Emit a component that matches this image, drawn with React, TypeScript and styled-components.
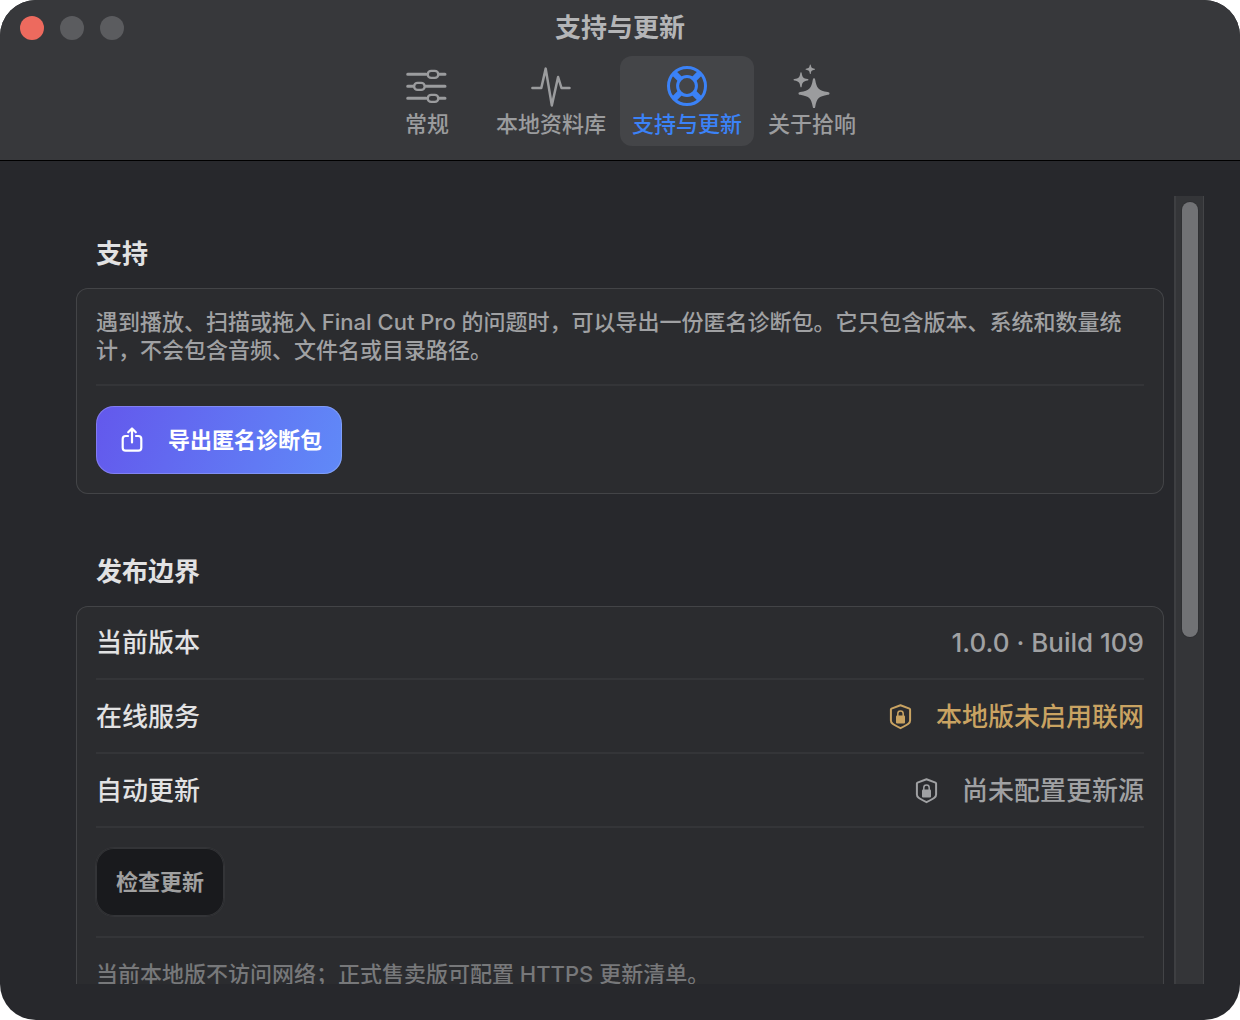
import React, { useState } from "react";
import styled, { createGlobalStyle } from "styled-components";

const GlobalStyle = createGlobalStyle`
  * { box-sizing: border-box; }
  body {
    margin: 0;
    background: #fff;
    font-family: Inter, "Noto Sans CJK SC", sans-serif;
    font-size: 22px;
    line-height: 28px;
    color: #e2e2e3;
  }
  button { font: inherit; border: 0; cursor: pointer; }
`;

const Window = styled.div`
  display: flex;
  flex-direction: column;
  height: 100vh;
  min-width: 640px;
  border-radius: 36px;
  overflow: hidden;
  background: #27282c;
`;

const Header = styled.header`
  flex: none;
  padding-bottom: 14px;
  background: #37383b;
  border-bottom: 1px solid #000;
`;

const TitleBar = styled.div`
  display: grid;
  grid-template-columns: 1fr auto 1fr;
  align-items: center;
  height: 56px;
  padding: 0 20px;
`;

const Lights = styled.div`
  display: flex;
  gap: 16px;
`;

const Light = styled.button<{ $color: string }>`
  width: 24px;
  height: 24px;
  padding: 0;
  border-radius: 50%;
  background: ${(p) => p.$color};
`;

const Title = styled.h1`
  margin: 0;
  font-size: 26px;
  line-height: 36px;
  font-weight: 700;
  color: #b4b5b7;
`;

const Tabs = styled.nav`
  display: flex;
  justify-content: center;
  gap: 2px;
`;

const Tab = styled.button<{ $active: boolean }>`
  display: flex;
  flex-direction: column;
  align-items: center;
  gap: 2px;
  min-width: 110px;
  padding: 8px 12px;
  border-radius: 12px;
  white-space: nowrap;
  font-weight: 500;
  color: ${(p) => (p.$active ? "#3b82f7" : "#9b9c9e")};
  background: ${(p) => (p.$active ? "#444548" : "transparent")};
`;

const Content = styled.main`
  flex: 1;
  min-height: 0;
  display: flex;
  padding: 35px 36px 36px;
`;

const Scroller = styled.div`
  flex: 1;
  min-width: 0;
  overflow-y: auto;
  scrollbar-width: none;
  padding: 40px 10px 40px 40px;
`;

const Track = styled.div`
  flex: none;
  width: 30px;
  padding: 6px;
  background: #343538;
  border-left: 2px solid #3e3f42;
  border-right: 1px solid #434447;
`;

const Thumb = styled.div`
  width: 16px;
  height: 56%;
  border-radius: 8px;
  background: #717275;
  box-shadow: 0 0 0 1px #2f3033;
`;

const Section = styled.section`
  & + & { margin-top: 60px; }
`;

const Heading = styled.h2`
  margin: 0 20px 16px;
  font-size: 26px;
  line-height: 36px;
  font-weight: 700;
`;

const Card = styled.div`
  padding: 0 20px;
  border-radius: 12px;
  background: #2b2c2f;
  box-shadow: inset 0 0 0 1px #434447;
`;

const Block = styled.div`
  padding: 20px 0;
  & + & { border-top: 2px solid #343538; }
`;

const Paragraph = styled.p`
  margin: 0;
  font-weight: 500;
  color: #a0a1a3;
`;

const List = styled.dl`
  margin: 0;
`;

const Row = styled.div`
  display: flex;
  align-items: center;
  justify-content: space-between;
  height: 74px;
  padding-top: 2px;
  border-bottom: 2px solid #343538;
  font-size: 26px;
  line-height: 36px;
  font-weight: 500;
`;

const Value = styled.dd<{ $tone?: "warn" }>`
  display: flex;
  align-items: center;
  gap: 20px;
  margin: 0;
  color: ${(p) => (p.$tone === "warn" ? "#c9a362" : "#a0a1a3")};
`;

const PrimaryButton = styled.button`
  display: flex;
  align-items: center;
  gap: 20px;
  height: 68px;
  padding: 0 20px;
  border-radius: 18px;
  font-weight: 700;
  color: #fff;
  background: linear-gradient(110deg, #6358ec, #608af8);
  box-shadow: inset 0 0 0 1px rgba(255, 255, 255, 0.2);
`;

const QuietButton = styled.button`
  display: block;
  height: 68px;
  padding: 0 20px;
  border-radius: 18px;
  font-weight: 700;
  color: #a0a0a0;
  background: #191a1d;
  box-shadow: 0 0 0 1px #333437, inset 0 0 0 1px #333437;
`;

const Footnote = styled.p`
  margin: 0;
  padding: 22px 0;
  border-top: 2px solid #343538;
  font-weight: 500;
  color: #77787a;
`;

const SlidersIcon = () => (
  <svg width="44" height="44" viewBox="0 0 44 44" fill="none" stroke="currentColor" strokeLinecap="round" aria-hidden="true">
    <path strokeWidth="3" d="M2.700 10.300H21M34.500 10.300h5.500M2.700 22.300H8M21 22.300h19M2.700 34.300H21M34.500 34.300h5.500" />
    <g strokeWidth="2.400">
      <rect x="22.700" y="6.900" width="10.600" height="7" rx="3.500" />
      <rect x="9.100" y="18.900" width="10.600" height="7" rx="3.500" />
      <rect x="22.700" y="30.900" width="10.600" height="7" rx="3.500" />
    </g>
  </svg>
);

const WaveIcon = () => (
  <svg width="44" height="44" viewBox="0 0 44 44" fill="none" stroke="currentColor" strokeWidth="2.500" strokeLinecap="round" strokeLinejoin="round" aria-hidden="true">
    <path d="M3.400 24h8.900l4.400-19.400L22.800 41.400l6.300-28.400 3.400 11h8" />
  </svg>
);

const LifebuoyIcon = () => (
  <svg width="44" height="44" viewBox="0 0 44 44" fill="none" stroke="currentColor" aria-hidden="true">
    <circle cx="22" cy="22" r="18.500" strokeWidth="3" />
    <circle cx="22" cy="22" r="9.400" strokeWidth="3" />
    <path strokeWidth="6" d="M9.300 9.300l6 6M34.700 9.300l-6 6M9.300 34.700l6-6M34.700 34.700l-6-6" />
  </svg>
);

const SparklesIcon = () => (
  <svg width="44" height="44" viewBox="0 0 44 44" fill="currentColor" aria-hidden="true">
    <path d="M24 14.200c.8 0 1 .7 1.200 1.600 1.500 8.600 3.200 10.700 12.600 12.300 1 .2 1.700.5 1.700 1.300s-.7 1.100-1.700 1.300c-9.400 1.600-11.100 3.700-12.600 12.300-.2.900-.4 1.600-1.200 1.600s-1-.7-1.200-1.600c-1.500-8.600-3.200-10.700-12.600-12.300-1-.2-1.700-.5-1.700-1.300s.7-1.100 1.700-1.300c9.400-1.600 11.100-3.700 12.600-12.300.2-.9.400-1.600 1.200-1.600z" />
    <path d="M11 8.300c.5 0 .6.400.7.900.7 4.100 1.500 5.100 5.900 5.900.5.100.9.300.9.700s-.4.600-.9.700c-4.400.8-5.200 1.800-5.900 5.900-.1.500-.2.900-.7.900s-.6-.4-.7-.9c-.7-4.100-1.500-5.100-5.900-5.900-.5-.1-.9-.3-.9-.7s.4-.6.900-.7c4.400-.8 5.200-1.800 5.900-5.900.1-.5.200-.9.700-.9z" />
    <path d="M20.300.5c.3 0 .4.300.5.600.4 2.600 1 3.200 3.800 3.700.3.100.5.200.5.500s-.2.400-.5.500c-2.800.5-3.400 1.100-3.800 3.700-.1.300-.2.600-.5.600s-.4-.3-.5-.6c-.4-2.600-1-3.200-3.800-3.700-.3-.1-.5-.2-.5-.5s.2-.4.500-.5c2.800-.5 3.400-1.100 3.800-3.700.1-.3.200-.6.500-.6z" />
  </svg>
);

const ShareIcon = () => (
  <svg width="32" height="32" viewBox="0 0 32 32" fill="none" stroke="currentColor" strokeWidth="2.200" strokeLinecap="round" strokeLinejoin="round" aria-hidden="true">
    <path d="M12 12H9.700a3 3 0 0 0-3 3v8.700a3 3 0 0 0 3 3h12.600a3 3 0 0 0 3-3V15a3 3 0 0 0-3-3H20M16 18.500V4.700M12.200 8.300L16 4.500l3.800 3.800" />
  </svg>
);

const ShieldLockIcon = () => (
  <svg width="32" height="32" viewBox="0 0 32 32" fill="none" stroke="currentColor" aria-hidden="true">
    <path strokeWidth="2" strokeLinejoin="round" d="M16.500 4.200L25.500 7.600a1 1 0 0 1 .6.900v11c0 2.600-1.400 3.700-9.600 7.700-8.200-4-9.600-5.100-9.600-7.700v-11a1 1 0 0 1 .6-.9z" />
    <path strokeWidth="1.500" d="M13.800 15v-2.300a2.700 2.700 0 0 1 5.400 0V15" />
    <rect x="12" y="14.500" width="9" height="8" rx="1" fill="currentColor" stroke="none" />
  </svg>
);

const tabs = [
  { label: "常规", Icon: SlidersIcon },
  { label: "本地资料库", Icon: WaveIcon },
  { label: "支持与更新", Icon: LifebuoyIcon },
  { label: "关于拾响", Icon: SparklesIcon },
];

export default function App() {
  const [active, setActive] = useState(2);
  return (
    <>
      <GlobalStyle />
      <Window>
        <Header>
          <TitleBar>
            <Lights>
              <Light $color="#ed6a5e" />
              <Light $color="#5b5c5f" />
              <Light $color="#5b5c5f" />
            </Lights>
            <Title>支持与更新</Title>
          </TitleBar>
          <Tabs>
            {tabs.map(({ label, Icon }, i) => (
              <Tab key={label} $active={i === active} onClick={() => setActive(i)}>
                <Icon />
                {label}
              </Tab>
            ))}
          </Tabs>
        </Header>
        <Content>
          <Scroller>
            <Section>
              <Heading>支持</Heading>
              <Card>
                <Block>
                  <Paragraph>
                    遇到播放、扫描或拖入 Final Cut Pro 的问题时，可以导出一份匿名诊断包。它只包含版本、系统和数量统计，不会包含音频、文件名或目录路径。
                  </Paragraph>
                </Block>
                <Block>
                  <PrimaryButton>
                    <ShareIcon />
                    导出匿名诊断包
                  </PrimaryButton>
                </Block>
              </Card>
            </Section>
            <Section>
              <Heading>发布边界</Heading>
              <Card>
                <List>
                  <Row>
                    <dt>当前版本</dt>
                    <Value>1.0.0 · Build 109</Value>
                  </Row>
                  <Row>
                    <dt>在线服务</dt>
                    <Value $tone="warn">
                      <ShieldLockIcon />
                      本地版未启用联网
                    </Value>
                  </Row>
                  <Row>
                    <dt>自动更新</dt>
                    <Value>
                      <ShieldLockIcon />
                      尚未配置更新源
                    </Value>
                  </Row>
                </List>
                <Block>
                  <QuietButton disabled>检查更新</QuietButton>
                </Block>
                <Footnote>当前本地版不访问网络；正式售卖版可配置 HTTPS 更新清单。</Footnote>
              </Card>
            </Section>
          </Scroller>
          <Track>
            <Thumb />
          </Track>
        </Content>
      </Window>
    </>
  );
}
